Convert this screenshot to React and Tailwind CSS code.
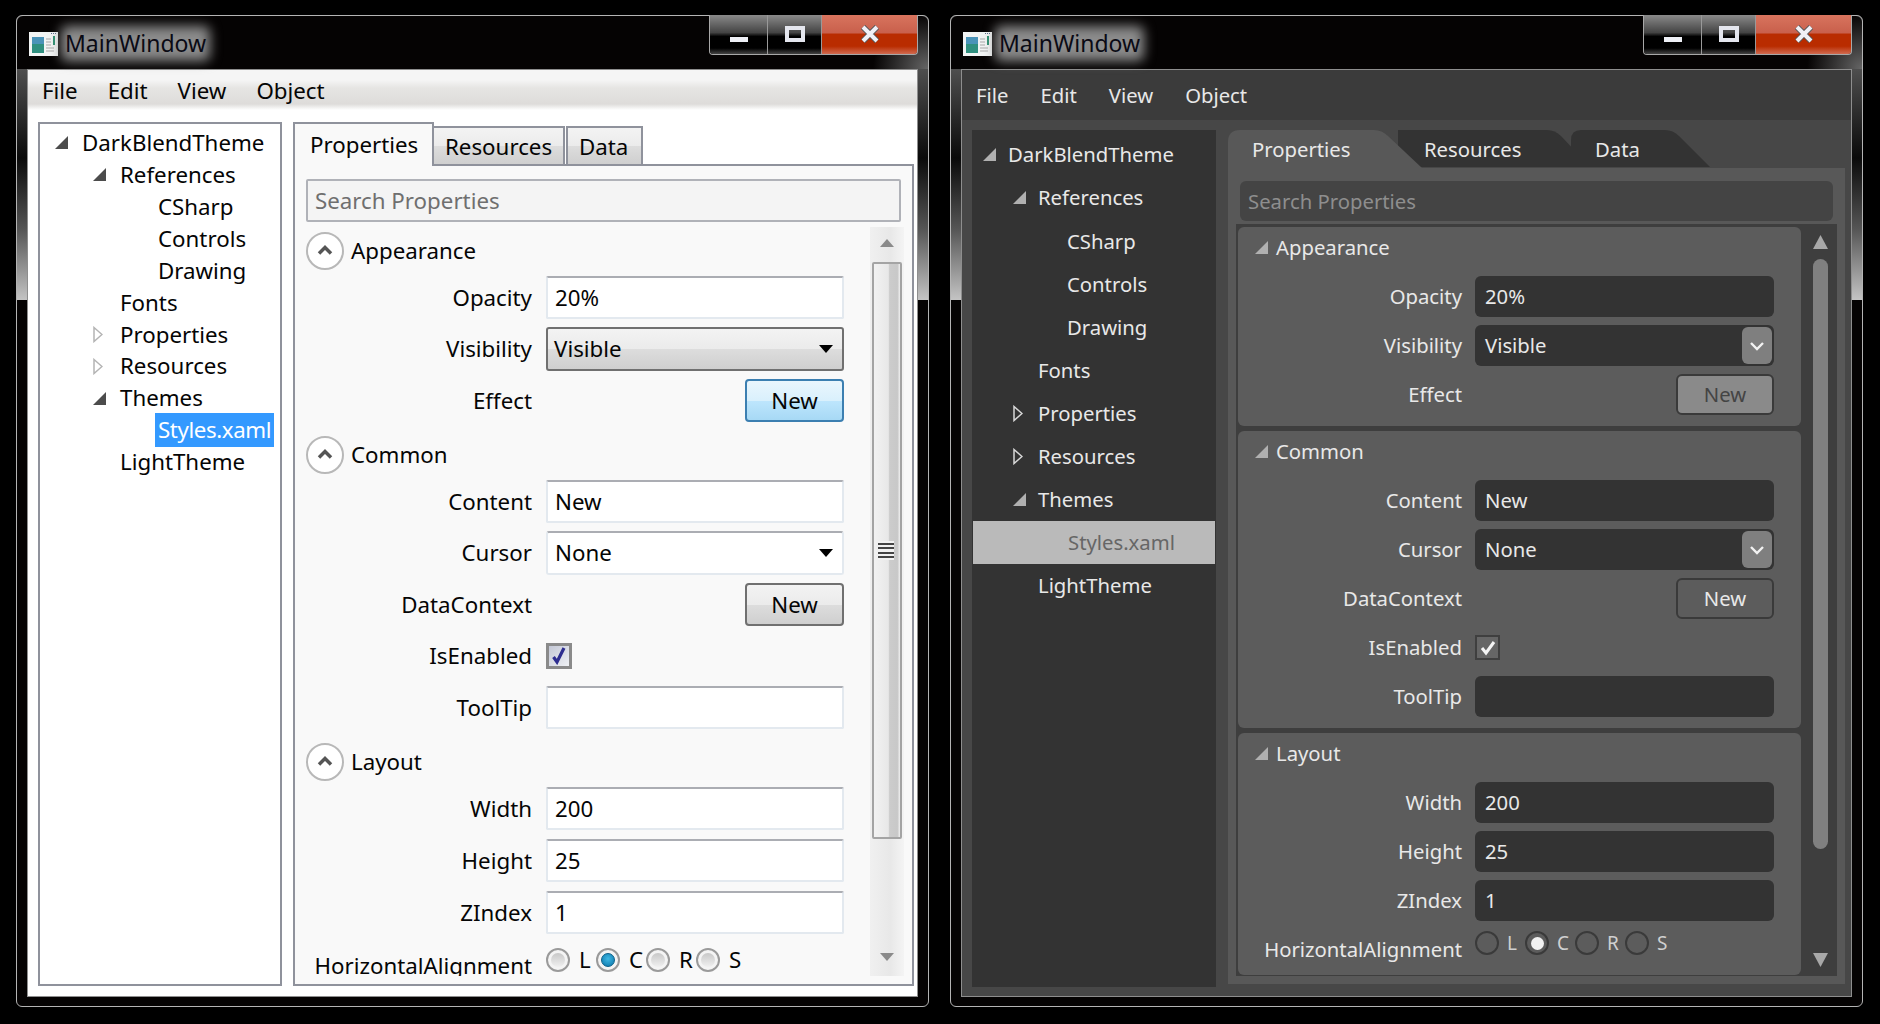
const TREE = [
  { name: "DarkBlendTheme", level: 0, arrow: "open" },
  { name: "References", level: 1, arrow: "open" },
  { name: "CSharp", level: 2 },
  { name: "Controls", level: 2 },
  { name: "Drawing", level: 2 },
  { name: "Fonts", level: 1 },
  { name: "Properties", level: 1, arrow: "closed" },
  { name: "Resources", level: 1, arrow: "closed" },
  { name: "Themes", level: 1, arrow: "open" },
  { name: "Styles.xaml", level: 2, selected: true },
  { name: "LightTheme", level: 1 },
];

const MENU = ["File", "Edit", "View", "Object"];
const LIGHT_INDENT = ["pl-[15px]", "pl-[53px]", "pl-[115px]"];
const DARK_INDENT = ["pl-[11px]", "pl-[41px]", "pl-[70px]"];

function AppIcon() {
  return (
    <svg width="29" height="24" viewBox="0 0 29 24" className="shrink-0">
      <rect width="29" height="24" fill="#f2f4f4" />
      <rect x="3" y="5" width="12" height="16" fill="#2f8f7f" />
      <rect x="3" y="5" width="12" height="7" fill="#4a93b8" />
      <path d="M17 7h5M17 10h5M17 13h5M17 16h8M17 19h8" stroke="#a8a8a8" />
      <rect x="24" y="4" width="2" height="9" fill="#2a8f70" />
      <path d="M22 1.5h5" stroke="#5a6a8a" strokeDasharray="1 1" />
    </svg>
  );
}

function CaptionButtons() {
  return (
    <div className="-mt-px mr-[10px] ml-auto flex h-[40px] shrink-0 overflow-hidden rounded-b-[4px] border border-t-0 border-[#a8a8a8]">
      <div className="flex w-[57px] items-end justify-center bg-[linear-gradient(180deg,#8a8a8a_0%,#444_45%,#000_55%,#000_85%,#444_100%)] pb-[12px]">
        <div className="h-[5px] w-[18px] bg-[#eef0f6]" />
      </div>
      <div className="flex w-[54px] items-start justify-center border-l border-[#999] bg-[linear-gradient(180deg,#8a8a8a_0%,#444_45%,#000_55%,#000_85%,#444_100%)] pt-[11px]">
        <div className="h-[16px] w-[20px] border-[4px] border-[#e4e6ee]" />
      </div>
      <div className="flex w-[96px] items-start justify-center border-l border-[#999] bg-[linear-gradient(180deg,#d8745e_0%,#c9604c_45%,#b92c00_50%,#b92c00_80%,#d06a50_100%)] pt-[10px]">
        <svg width="20" height="18" viewBox="0 0 20 18">
          <path d="M3 2l14 14M17 2L3 16" stroke="#555" strokeWidth="6" />
          <path d="M3 2l14 14M17 2L3 16" stroke="#f0f0f6" strokeWidth="4" />
        </svg>
      </div>
    </div>
  );
}

function Window({ children }) {
  return (
    <div className="flex h-[992px] w-[913px] shrink-0 flex-col rounded-[6px] border border-[#b4b4b4] bg-[#050303] bg-[linear-gradient(180deg,#777_0%,#0a0a0a_50%,#555_75%,#c4c4c4_100%)] bg-[length:100%_284px] bg-no-repeat">
      <div className="flex h-[53px] shrink-0 items-start rounded-t-[6px] bg-[#050303] bg-[radial-gradient(circle_at_100%_100%,#666_0px,#050303_55px)]">
        <div className="mt-[14px] ml-[12px] flex items-center">
          <AppIcon />
          <div className="relative -mt-px ml-[7px] h-[29px]">
            <div className="absolute -inset-x-[4px] -inset-y-[3px] rounded-[6px] bg-[#8c8c8c] blur-[6px]" />
            <span className="relative block text-[23px] leading-[29px] text-[#0a0a14]">
              MainWindow
            </span>
          </div>
        </div>
        <CaptionButtons />
      </div>
      <div className="mx-[10px] h-[928px] overflow-hidden border border-[#8e8e8e]">
        {children}
      </div>
    </div>
  );
}

function ExpandArrow({ open, fill, stroke }) {
  if (open) {
    return (
      <svg width="13" height="13" viewBox="0 0 13 13">
        <path d="M13 0v13H0z" fill={fill} />
      </svg>
    );
  }
  return (
    <svg width="10" height="17" viewBox="0 0 10 17">
      <path d="M1 1.5l8 7-8 7z" fill="none" stroke={stroke} strokeWidth="1.5" />
    </svg>
  );
}

function LightTree() {
  return (
    <div className="h-[864px] w-[244px] shrink-0 border-2 border-[#8f929c] bg-white pt-[3px]">
      {TREE.map((item) => (
        <div
          key={item.name}
          className={`flex h-[31.9px] items-center ${LIGHT_INDENT[item.level]}`}
        >
          {item.level < 2 && (
            <div className="flex w-[27px] items-center">
              {item.arrow && (
                <ExpandArrow
                  open={item.arrow === "open"}
                  fill="#4c4c4c"
                  stroke="#b4b4b4"
                />
              )}
            </div>
          )}
          <span
            className={
              item.selected
                ? "bg-[#3399ff] px-[3px] tracking-[-0.4px] text-white"
                : item.level === 2
                  ? "px-[3px]"
                  : ""
            }
          >
            {item.name}
          </span>
        </div>
      ))}
    </div>
  );
}

function LightRow({ label, children, tall }) {
  return (
    <div className={`flex ${tall ? "items-start" : "h-[43px] items-center"}`}>
      <span className={`w-[226px] text-right ${tall ? "pt-[6px]" : ""}`}>
        {label}
      </span>
      <div className="ml-[14px] w-[298px]">{children}</div>
    </div>
  );
}

function LightInput({ value }) {
  return (
    <div className="flex h-[43px] items-center rounded-[2px] border-2 border-[#e3e9ef] border-t-[#abadb3] bg-white pl-[7px]">
      {value}
    </div>
  );
}

function LightCombo({ value, active }) {
  return (
    <div
      className={`flex h-[44px] items-center justify-between rounded-[3px] border-2 pr-[9px] ${
        active
          ? "border-[#707070] bg-[linear-gradient(180deg,#f3f3f3_0%,#ebebeb_50%,#dddddd_50%,#cfcfcf_100%)] pl-[6px]"
          : "border-[#e3e9ef] border-t-[#abadb3] bg-white pl-[7px]"
      }`}
    >
      {value}
      <svg width="14" height="8" viewBox="0 0 14 8">
        <path d="M0 0h14L7 8z" fill="#000" />
      </svg>
    </div>
  );
}

function LightButton({ hot }) {
  return (
    <div
      className={`ml-auto flex h-[43px] w-[99px] items-center justify-center rounded-[4px] border-2 ${
        hot
          ? "border-[#3c7fb1] bg-[linear-gradient(180deg,#eaf6fd_0%,#d9f0fc_50%,#bee6fd_50%,#a7d9f5_100%)]"
          : "border-[#707070] bg-[linear-gradient(180deg,#f3f3f3_0%,#ebebeb_50%,#dddddd_50%,#cfcfcf_100%)]"
      }`}
    >
      New
    </div>
  );
}

function LightHeader({ title }) {
  return (
    <div className="mb-[6px] flex h-[38px] items-center">
      <div className="flex h-[38px] w-[38px] items-center justify-center rounded-full border-2 border-[#b8b8b8] bg-white">
        <svg width="18" height="12" viewBox="0 0 18 12" className="-mt-[3px]">
          <path d="M3 9.5l6-6 6 6" fill="none" stroke="#555" strokeWidth="3.5" />
        </svg>
      </div>
      <span className="ml-[7px]">{title}</span>
    </div>
  );
}

function LightRadio({ label, checked }) {
  return (
    <div className="flex w-[50px] items-center">
      <div className="flex h-[24px] w-[24px] shrink-0 items-center justify-center rounded-full border-2 border-[#9a9a9a] bg-[#f4f4f4]">
        <div
          className={`h-[14px] w-[14px] rounded-full ${
            checked
              ? "border border-[#0a5f88] bg-[radial-gradient(circle_at_50%_40%,#3fb8e4,#0a74a8)]"
              : "bg-[linear-gradient(180deg,#c8c8c8,#f0f0f0)]"
          }`}
        />
      </div>
      <span className="ml-[9px]">{label}</span>
    </div>
  );
}

function LightWindow() {
  return (
    <Window>
      <div className="h-full bg-white text-[#050505]">
        <div className="flex h-[40px] gap-[30px] bg-[linear-gradient(180deg,#f5f5f5_0%,#f5f5f5_25%,#e6e5e3_45%,#dedcda_85%,#ffffff_100%)] pt-[4px] pl-[14px]">
          {MENU.map((item) => (
            <span key={item}>{item}</span>
          ))}
        </div>
        <div className="flex pt-[12px] pl-[10px]">
          <LightTree />
          <div className="ml-[11px] w-[621px]">
            <div className="relative z-10 flex h-[44px] items-end">
              <div className="flex h-[44px] w-[141px] items-center border-2 border-b-0 border-[#8f929c] bg-[#f9f9f9] pl-[15px]">
                Properties
              </div>
              <div className="flex h-[40px] w-[131px] items-center border-2 border-l-0 border-[#8f929c] bg-[linear-gradient(180deg,#f3f3f3_0%,#ebebeb_50%,#dddddd_50%,#cfcfcf_100%)] pt-[2px] pl-[11px]">
                Resources
              </div>
              <div className="ml-px flex h-[40px] w-[77px] items-center border-2 border-[#8f929c] bg-[linear-gradient(180deg,#f3f3f3_0%,#ebebeb_50%,#dddddd_50%,#cfcfcf_100%)] pt-[2px] pl-[11px]">
                Data
              </div>
            </div>
            <div className="-mt-[2px] h-[822px] border-2 border-[#8f929c] bg-[#f9f9f9]">
              <div className="mx-[11px] mt-[13px] flex h-[43px] items-center rounded-[2px] border-2 border-[#b0b2b8] bg-[#f4f4f4] pt-px pl-[7px] text-[#6f6f6f]">
                Search Properties
              </div>
              <div className="mt-[5px] flex h-[749px] overflow-hidden">
                <div className="w-[575px] shrink-0 pt-[5px] pl-[11px]">
                  <LightHeader title="Appearance" />
                  <div className="flex flex-col gap-[8.5px]">
                    <LightRow label="Opacity"><LightInput value="20%" /></LightRow>
                    <LightRow label="Visibility"><LightCombo value="Visible" active /></LightRow>
                    <LightRow label="Effect"><LightButton hot /></LightRow>
                  </div>
                  <div className="mt-[14px]"><LightHeader title="Common" /></div>
                  <div className="flex flex-col gap-[8.5px]">
                    <LightRow label="Content"><LightInput value="New" /></LightRow>
                    <LightRow label="Cursor"><LightCombo value="None" /></LightRow>
                    <LightRow label="DataContext"><LightButton /></LightRow>
                    <LightRow label="IsEnabled">
                      <div className="flex h-[26px] w-[26px] items-center justify-center border-[3px] border-[#8a8a8a] bg-[linear-gradient(135deg,#c4c8d6,#eef0f4)]">
                        <svg width="16" height="18" viewBox="0 0 16 18">
                          <path d="M2.5 10l3.5 5 7-14" fill="none" stroke="#2e2e90" strokeWidth="3.2" />
                        </svg>
                      </div>
                    </LightRow>
                    <LightRow label="ToolTip"><LightInput value="" /></LightRow>
                  </div>
                  <div className="mt-[14px]"><LightHeader title="Layout" /></div>
                  <div className="flex flex-col gap-[9px]">
                    <LightRow label="Width"><LightInput value="200" /></LightRow>
                    <LightRow label="Height"><LightInput value="25" /></LightRow>
                    <LightRow label="ZIndex"><LightInput value="1" /></LightRow>
                    <LightRow label="HorizontalAlignment" tall>
                      <div className="flex">
                        <LightRadio label="L" />
                        <LightRadio label="C" checked />
                        <LightRadio label="R" />
                        <LightRadio label="S" />
                      </div>
                    </LightRow>
                  </div>
                </div>
                <div className="flex w-[34px] shrink-0 flex-col items-center bg-[linear-gradient(90deg,#f0f0f0,#e8e8e8_60%,#f4f4f4)]">
                  <svg width="14" height="8" viewBox="0 0 14 8" className="mt-[12px]">
                    <path d="M7 0l7 8H0z" fill="#8a8a8a" />
                  </svg>
                  <div className="mt-[15px] flex h-[577px] w-[30px] items-center justify-center rounded-[2px] border-2 border-[#a4a4a4] bg-[linear-gradient(90deg,#f2f2f2_0%,#e8e8e8_55%,#cccccc_60%,#c8c8c8_90%,#f0f0f0_100%)]">
                    <div className="-ml-[2px] flex h-[19px] w-[16px] flex-col justify-between bg-[#f2f2f2] py-[2px]">
                      <div className="h-[2px] bg-[#444]" />
                      <div className="h-[2px] bg-[#444]" />
                      <div className="h-[2px] bg-[#444]" />
                      <div className="h-[2px] bg-[#444]" />
                    </div>
                  </div>
                  <svg width="14" height="8" viewBox="0 0 14 8" className="mt-[114px]">
                    <path d="M0 0h14L7 8z" fill="#8a8a8a" />
                  </svg>
                </div>
              </div>
            </div>
          </div>
        </div>
      </div>
    </Window>
  );
}

function DarkTree() {
  return (
    <div className="h-[857px] w-[244px] shrink-0 bg-[#333333] pt-[3px]">
      {TREE.map((item) => (
        <div
          key={item.name}
          className={`flex h-[43.1px] items-center ${DARK_INDENT[item.level]} ${
            item.selected ? "mx-px bg-[#bababa] text-[#666666]" : ""
          }`}
        >
          {item.level < 2 && (
            <div className="flex w-[25px] items-center">
              {item.arrow && (
                <ExpandArrow
                  open={item.arrow === "open"}
                  fill="#b0b0b0"
                  stroke="#d8d8d8"
                />
              )}
            </div>
          )}
          {item.level === 2 && <div className="w-[25px]" />}
          <span>{item.name}</span>
        </div>
      ))}
    </div>
  );
}

function DarkTab({ label, width, path, className, active }) {
  return (
    <div className={`relative h-[38px] shrink-0 ${width} ${className}`}>
      <svg className="absolute inset-0" width="100%" height="38">
        <path d={path} fill={active ? "#585858" : "#333333"} />
      </svg>
      <span className="relative block leading-[38px]">{label}</span>
    </div>
  );
}

function DarkRow({ label, children, tall }) {
  return (
    <div className={`flex ${tall ? "items-start" : "h-[41px] items-center"}`}>
      <span className={`w-[224px] text-right ${tall ? "pt-[5px]" : ""}`}>
        {label}
      </span>
      <div className="ml-[13px] w-[299px]">{children}</div>
    </div>
  );
}

function DarkInput({ value }) {
  return (
    <div className="flex h-[41px] items-center rounded-[6px] bg-[#333333] pl-[10px]">
      {value}
    </div>
  );
}

function DarkCombo({ value }) {
  return (
    <div className="flex h-[41px] items-center justify-between rounded-[6px] bg-[#333333] pr-[2px] pl-[10px]">
      {value}
      <div className="flex h-[37px] w-[30px] items-center justify-center rounded-[6px] bg-[#7f7f7f]">
        <svg width="16" height="10" viewBox="0 0 16 10">
          <path d="M2 2l6 6 6-6" fill="none" stroke="#f2f2f2" strokeWidth="2.4" />
        </svg>
      </div>
    </div>
  );
}

function DarkButton({ hot }) {
  return (
    <div
      className={`ml-auto flex h-[41px] w-[98px] items-center justify-center rounded-[6px] border-2 ${
        hot
          ? "border-[#3a3a3a] bg-[#8a8a8a] text-[#444444]"
          : "border-[#3a3a3a] bg-[#5c5c5c]"
      }`}
    >
      New
    </div>
  );
}

function DarkSection({ title, rows }) {
  return (
    <div className="rounded-[6px] bg-[#5c5c5c] pt-[7px] pb-[11px] pl-[17px]">
      <div className="mb-[16px] flex h-[26px] items-center">
        <ExpandArrow open fill="#b0b0b0" stroke="#d8d8d8" />
        <span className="ml-[8px]">{title}</span>
      </div>
      <div className="-ml-[17px] flex flex-col gap-[8px]">{rows}</div>
    </div>
  );
}

function DarkRadio({ label, checked }) {
  return (
    <div className="flex w-[50px] items-center">
      <div className="flex h-[24px] w-[24px] shrink-0 items-center justify-center rounded-full border-2 border-[#3a3a3a]">
        {checked && <div className="h-[13px] w-[13px] rounded-full bg-[#f2f2f2]" />}
      </div>
      <span className="ml-[8px] text-[19px] text-[#d0d0d0]">{label}</span>
    </div>
  );
}

function DarkWindow() {
  return (
    <Window>
      <div className="h-full bg-[#474747] text-[20.3px] text-[#e8e8e8]">
        <div className="flex h-[50px] items-center gap-[32px] bg-[#3b3b3b] pl-[14px]">
          {MENU.map((item) => (
            <span key={item}>{item}</span>
          ))}
        </div>
        <div className="flex pt-[10px] pl-[10px]">
          <DarkTree />
          <div className="ml-[12px] h-[854px] w-[617px]">
            <div className="flex h-[38px]">
              <DarkTab
                active
                label="Properties"
                width="w-[194px]"
                className="z-20 pl-[24px]"
                path="M0 38V12Q0 0 12 0H146Q154 0 160 6L194 38Z"
              />
              <DarkTab
                label="Resources"
                width="w-[192px]"
                className="z-10 -ml-[24px] pl-[26px]"
                path="M0 0H149Q157 0 163 6L192 37H0Z"
              />
              <DarkTab
                label="Data"
                width="w-[139px]"
                className="z-20 -ml-[19px] pl-[24px]"
                path="M0 37V10Q0 0 10 0H94Q102 0 108 6L139 37Z"
              />
            </div>
            <div className="h-[816px] bg-[#585858] pt-[13px]">
              <div className="mx-[12px] flex h-[40px] items-center rounded-[6px] bg-[#444444] pl-[8px] text-[#8e8e8e]">
                Search Properties
              </div>
              <div className="mt-[3px] ml-[8px] flex h-[752px] w-[601px] overflow-hidden bg-[#3e3e3e] pt-[3px] pl-[2px]">
                <div className="flex w-[563px] shrink-0 flex-col gap-[5px]">
                  <DarkSection
                    title="Appearance"
                    rows={
                      <>
                        <DarkRow label="Opacity"><DarkInput value="20%" /></DarkRow>
                        <DarkRow label="Visibility"><DarkCombo value="Visible" /></DarkRow>
                        <DarkRow label="Effect"><DarkButton hot /></DarkRow>
                      </>
                    }
                  />
                  <DarkSection
                    title="Common"
                    rows={
                      <>
                        <DarkRow label="Content"><DarkInput value="New" /></DarkRow>
                        <DarkRow label="Cursor"><DarkCombo value="None" /></DarkRow>
                        <DarkRow label="DataContext"><DarkButton /></DarkRow>
                        <DarkRow label="IsEnabled">
                          <div className="flex h-[25px] w-[25px] items-center justify-center border-2 border-[#3f3f3f] bg-[#666666]">
                            <svg width="18" height="16" viewBox="0 0 18 16">
                              <path d="M3 8l4 5 8-11" fill="none" stroke="#f4f4f4" strokeWidth="3" />
                            </svg>
                          </div>
                        </DarkRow>
                        <DarkRow label="ToolTip"><DarkInput value="" /></DarkRow>
                      </>
                    }
                  />
                  <DarkSection
                    title="Layout"
                    rows={
                      <>
                        <DarkRow label="Width"><DarkInput value="200" /></DarkRow>
                        <DarkRow label="Height"><DarkInput value="25" /></DarkRow>
                        <DarkRow label="ZIndex"><DarkInput value="1" /></DarkRow>
                        <DarkRow label="HorizontalAlignment" tall>
                          <div className="flex">
                            <DarkRadio label="L" />
                            <DarkRadio label="C" checked />
                            <DarkRadio label="R" />
                            <DarkRadio label="S" />
                          </div>
                        </DarkRow>
                      </>
                    }
                  />
                </div>
                <div className="ml-[12px] flex w-[15px] shrink-0 flex-col items-center">
                  <svg width="15" height="14" viewBox="0 0 15 14" className="mt-[8px]">
                    <path d="M7.5 0L15 14H0z" fill="#a8a8a8" />
                  </svg>
                  <div className="mt-[10px] h-[590px] w-[15px] shrink-0 rounded-full bg-[#808080]" />
                  <svg width="15" height="14" viewBox="0 0 15 14" className="mt-[104px]">
                    <path d="M0 0h15L7.5 14z" fill="#a8a8a8" />
                  </svg>
                </div>
              </div>
            </div>
          </div>
        </div>
      </div>
    </Window>
  );
}

export default function App() {
  return (
    <div className="flex h-[1024px] w-[1880px] gap-[21px] overflow-hidden bg-black pt-[15px] pl-[16px] font-['Noto_Sans',sans-serif] text-[22.3px]">
      <LightWindow />
      <DarkWindow />
    </div>
  );
}
